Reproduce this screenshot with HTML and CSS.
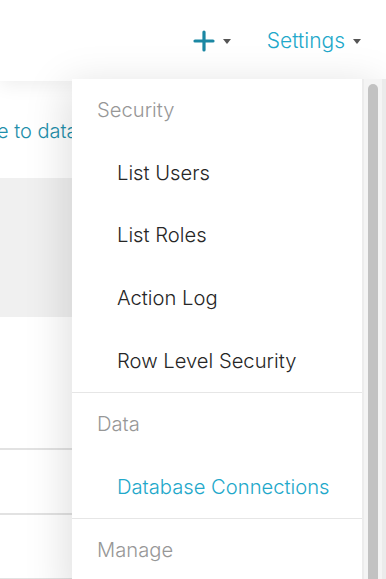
FILE: index.html
```html
<!DOCTYPE html>
<html>
<head>
<meta charset="utf-8">
<link rel="stylesheet" href="styles.css">
</head>
<body>
<header class="navbar">
  <div class="nav-item nav-new">
    <svg class="plus" width="22" height="22" viewBox="0 0 22 22"><path d="M11 2v18M2 11h18" stroke="#1b87a3" stroke-width="3.2" stroke-linecap="round"/></svg>
    <span class="caret"></span>
  </div>
  <div class="nav-item nav-settings">
    <span class="settings-label">Settings</span>
    <span class="caret"></span>
  </div>
</header>
<main class="page">
  <div class="page-link">e to database</div>
  <div class="grey-panel"></div>
  <div class="rows">
    <div class="row row-tall"></div>
    <div class="row"></div>
    <div class="row"></div>
  </div>
</main>
<div class="dropdown">
  <div class="menu">
    <div class="menu-group">
      <div class="menu-row header">Security</div>
      <div class="menu-row item">List Users</div>
      <div class="menu-row item">List Roles</div>
      <div class="menu-row item">Action Log</div>
      <div class="menu-row item">Row Level Security</div>
    </div>
    <div class="menu-group">
      <div class="menu-row header">Data</div>
      <div class="menu-row item active">Database Connections</div>
    </div>
    <div class="menu-group">
      <div class="menu-row header">Manage</div>
    </div>
  </div>
  <div class="scrollbar"><div class="thumb"></div></div>
</div>
</body>
</html>
```
FILE: styles.css
```css
* { box-sizing: border-box; }
html, body { margin: 0; padding: 0; }
body {
  width: 386px;
  height: 579px;
  overflow: hidden;
  background: #ffffff;
  font-family: Inter, Lato, sans-serif;
  position: relative;
}
.navbar {
  height: 81px;
  background: #fff;
  display: flex;
  justify-content: flex-end;
  align-items: center;
  padding-right: 25px;
  gap: 36px;
  box-shadow: 0 4px 18px rgba(0,0,0,0.07);
  position: relative;
  z-index: 1;
}
.nav-item {
  display: flex;
  align-items: center;
  gap: 8px;
}
.plus { display: block; }
.caret {
  width: 0; height: 0;
  border-left: 4.5px solid transparent;
  border-right: 4.5px solid transparent;
  border-top: 5px solid #555;
  margin-top: 1px;
}
.settings-label {
  font-size: 21px;
  font-weight: 300;
  color: #22a8ca;
}
.page {
  background: #fff;
  padding-top: 2px;
}
.page-link {
  margin-left: -3px;
  height: 95px;
  display: flex;
  align-items: center;
  font-size: 20px;
  font-weight: 300;
  color: #1f8fab;
  white-space: nowrap;
}
.grey-panel {
  height: 139px;
  background: #f0f0f0;
}
.row {
  height: 65px;
  border-bottom: 2px solid #e2e2e2;
}
.row-tall { height: 133px; }
.dropdown {
  position: absolute;
  top: 79px;
  left: 72px;
  width: 314px;
  height: 520px;
  display: flex;
  background: #fff;
  box-shadow: -6px 6px 40px rgba(0,0,0,0.13);
  z-index: 2;
}
.menu {
  flex: 1;
  border-right: 2px solid #ececec;
}
.menu-group + .menu-group { border-top: 1px solid #e6e6e6; }
.menu-row {
  height: 62.6px;
  display: flex;
  align-items: center;
  font-size: 20.2px;
  font-weight: 300;
  white-space: nowrap;
  padding-bottom: 1px;
}
.header { padding-left: 25px; color: #979797; }
.item { padding-left: 45px; color: #262626; }
.item.active { color: #22a8ca; }
.scrollbar {
  width: 22px;
  background: #f4f4f4;
  border-right: 4px solid #ebebeb;
  padding: 5px 4px 0 4px;
}
.thumb {
  height: 100%;
  background: #c2c2c2;
  border-radius: 6px 6px 0 0;
}
```
